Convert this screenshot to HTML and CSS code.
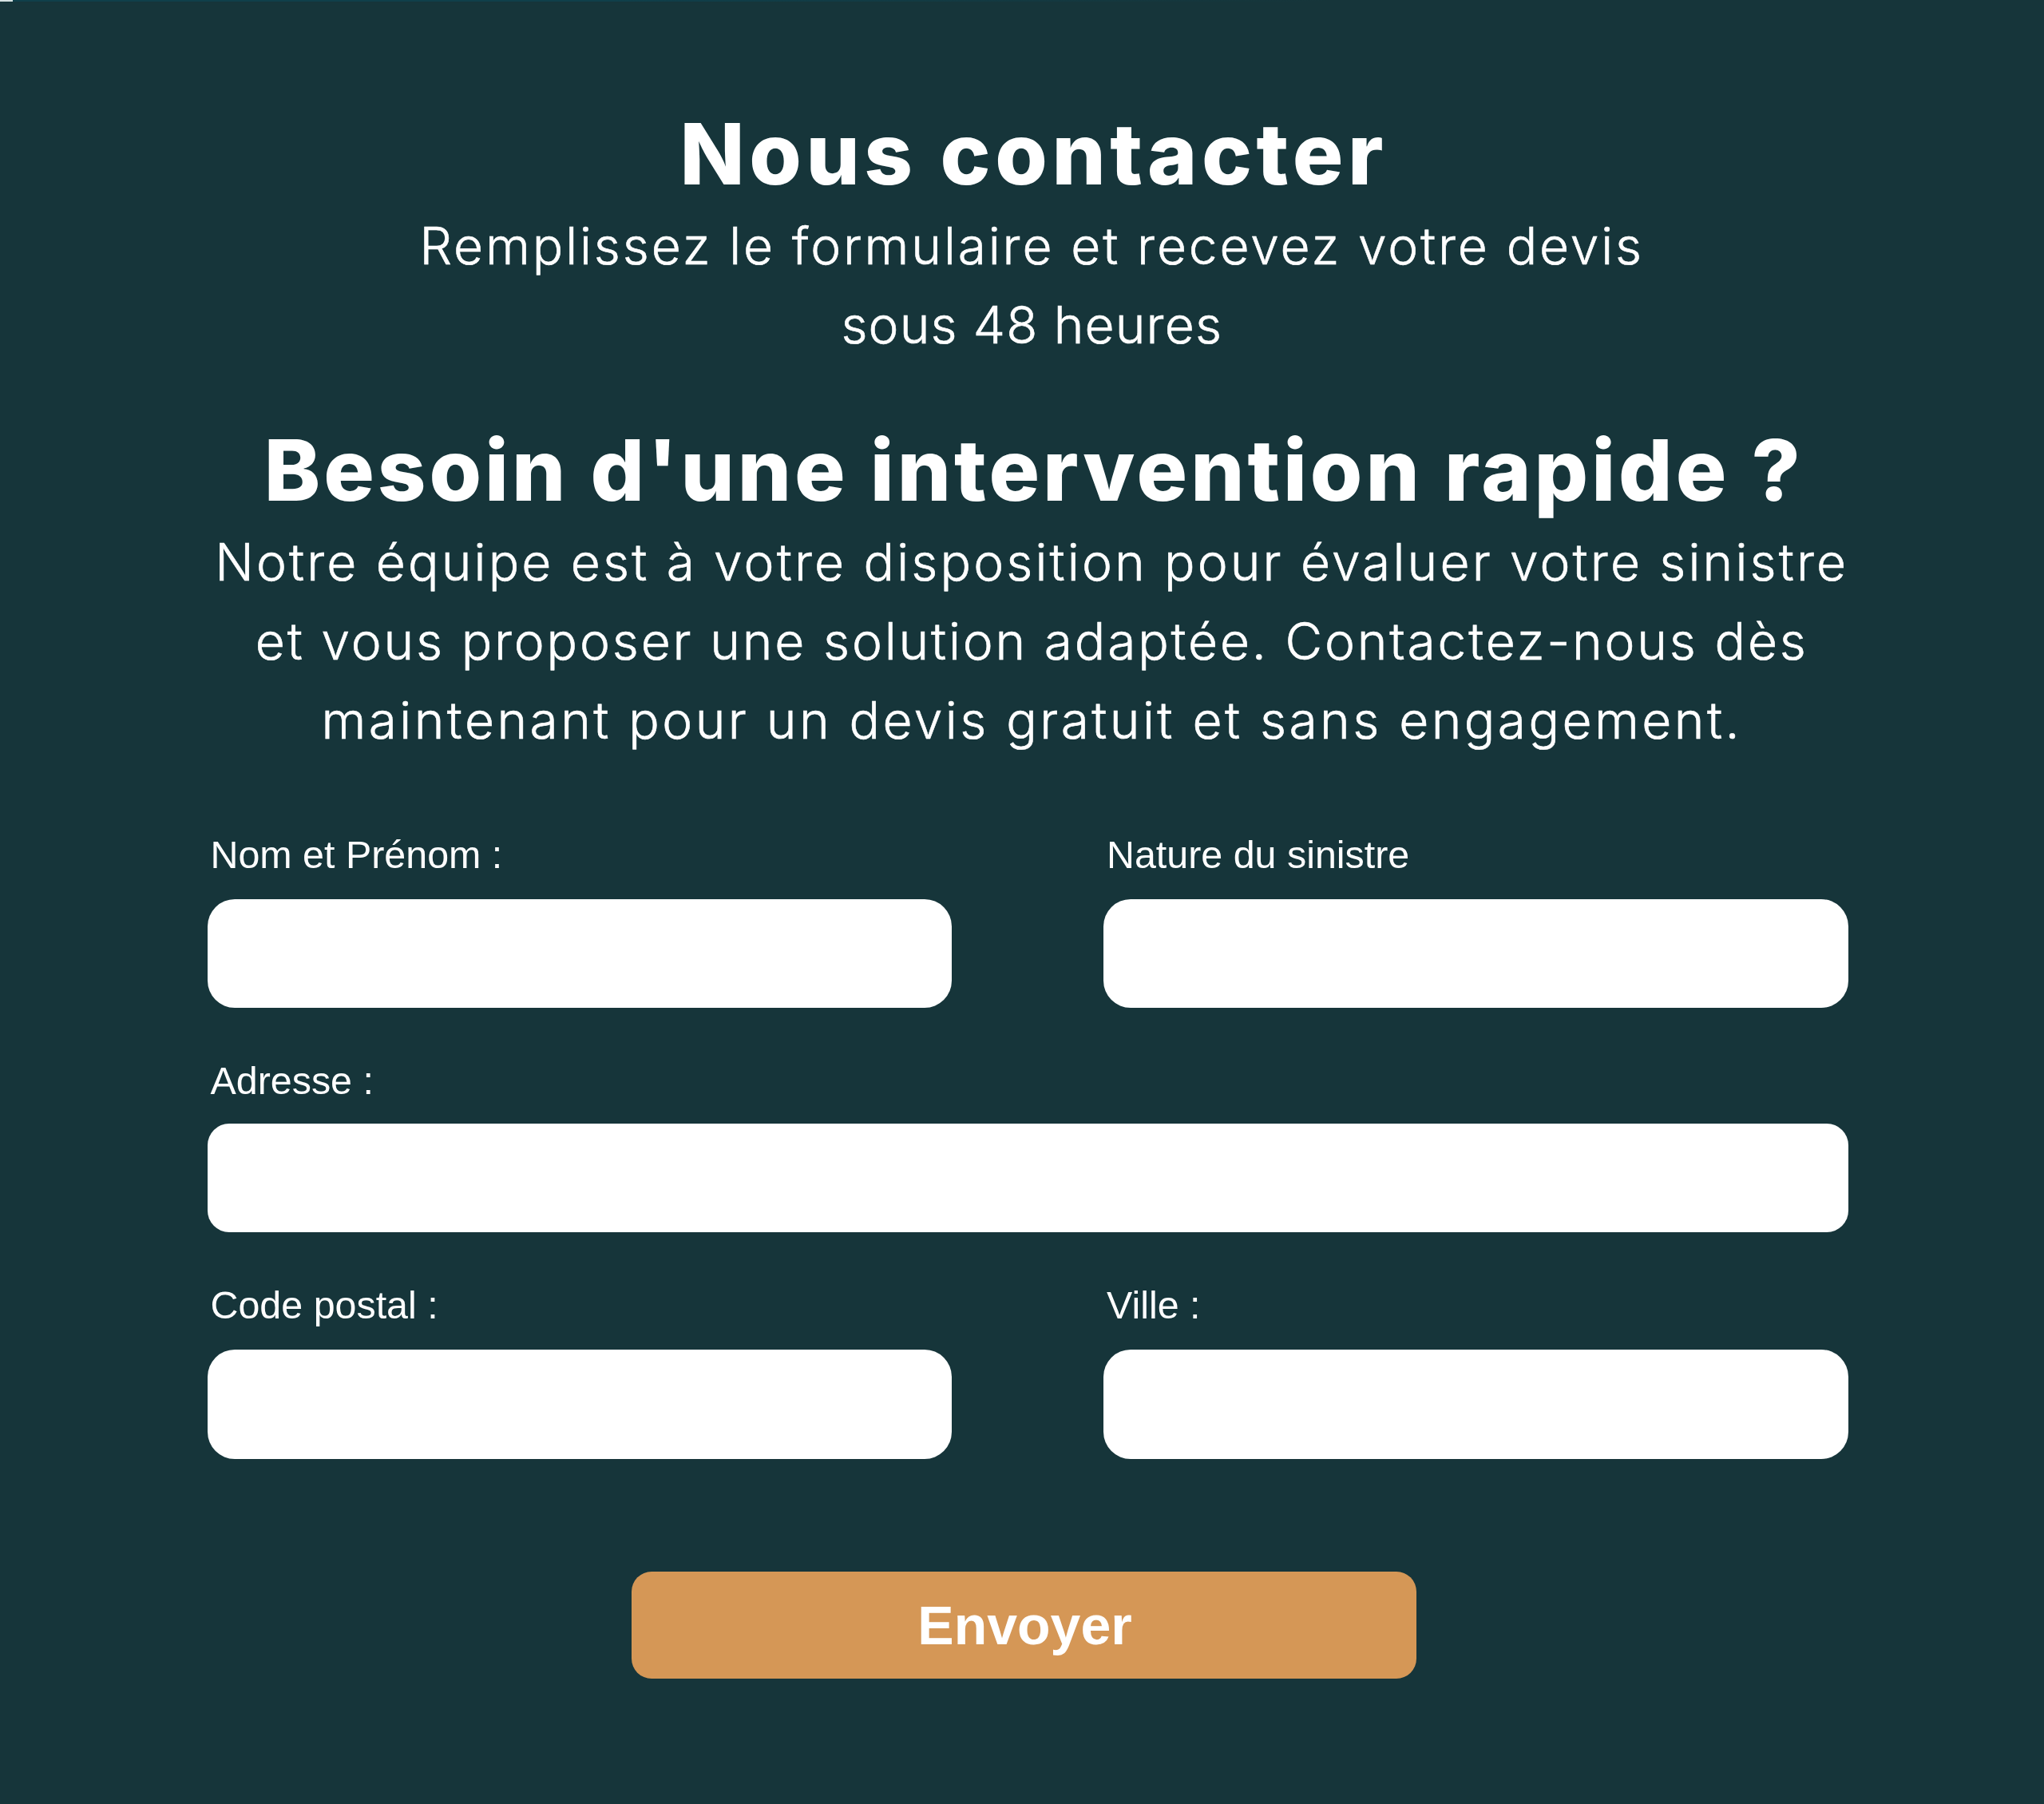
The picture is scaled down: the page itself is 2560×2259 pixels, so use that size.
FILE: index.html
```
<!DOCTYPE html>
<html lang="fr">
<head>
  <meta charset="UTF-8" />
  <title>Nous contacter</title>
  <link rel="stylesheet" href="styles.css">
</head>
<body>
  <div class="top-line"><span class="top-line-start"></span></div>

  <section class="contact">
    <div class="intro">
      <h1 class="title title-contact">Nous contacter</h1>
      <p class="text">
        <span class="line line-1">Remplissez le formulaire et recevez votre devis</span>
        <span class="line line-2">sous 48 heures</span>
      </p>

      <h2 class="title title-urgent">Besoin d'une intervention rapide ?</h2>
      <p class="text">
        <span class="line line-3">Notre équipe est à votre disposition pour évaluer votre sinistre</span>
        <span class="line line-4">et vous proposer une solution adaptée. Contactez-nous dès</span>
        <span class="line line-5">maintenant pour un devis gratuit et sans engagement.</span>
      </p>
    </div>

    <form class="contact-form">
      <div class="row">
        <div class="field">
          <label for="nom">Nom et Prénom :</label>
          <input type="text" id="nom" name="nom">
        </div>
        <div class="field">
          <label for="sinistre">Nature du sinistre</label>
          <input type="text" id="sinistre" name="sinistre">
        </div>
      </div>

      <div class="row">
        <div class="field field-wide">
          <label for="adresse">Adresse :</label>
          <input type="text" id="adresse" name="adresse">
        </div>
      </div>

      <div class="row">
        <div class="field">
          <label for="code">Code postal :</label>
          <input type="text" id="code" name="code">
        </div>
        <div class="field">
          <label for="ville">Ville :</label>
          <input type="text" id="ville" name="ville">
        </div>
      </div>

      <button type="submit" class="send">Envoyer</button>
    </form>
  </section>
</body>
</html>
```

FILE: styles.css
```
* {
  box-sizing: border-box;
}

body {
  margin: 0;
  min-height: 2259px;
  background-color: #16353a;
  color: white;
  font-family: "Liberation Sans", Arial, sans-serif;
}

.top-line {
  height: 2px;
  background: linear-gradient(to right, #0f3f4a 30%, #16353a 65%);
}

.top-line-start {
  display: block;
  width: 16px;
  height: 2px;
  background-color: #d5e2e2;
}

.contact {
  padding: 137.5px 245.5px 0 259.5px;
}

/* Intro */
.intro {
  margin: 0 -26.5px 0 -16px;
  text-align: center;
  font-family: Inter, "Open Sans", sans-serif;
}

.title {
  margin: 0 0 12px 5px;
  font-size: 106px;
  font-weight: 800;
  line-height: 106px;
  white-space: nowrap;
}

.title-contact {
  letter-spacing: 5.6px;
}

.title-urgent {
  margin-top: 80px;
  letter-spacing: 3.95px;
}

.text {
  margin: 0;
  font-size: 64px;
  font-weight: 300;
  line-height: 99px;
  -webkit-text-stroke: 0.6px white;
}

.line {
  display: block;
  white-space: nowrap;
}

.line-1 {
  letter-spacing: 2.88px;
}

.line-2 {
  letter-spacing: 1.15px;
}

.line-3 {
  letter-spacing: 3.16px;
}

.line-4 {
  letter-spacing: 2.84px;
}

.line-5 {
  letter-spacing: 3.46px;
}

/* Form */
.contact-form {
  display: flex;
  flex-direction: column;
  gap: 63px;
  margin-top: 91px;
}

.row {
  display: flex;
  justify-content: space-between;
}

.field {
  display: flex;
  flex-direction: column;
  gap: 28px;
  width: 932.5px;
}

.field label {
  padding-left: 4px;
  font-size: 48.4px;
  line-height: 56px;
}

.field input {
  width: 100%;
  height: 136.4px;
  padding: 0 30px;
  border: none;
  border-radius: 34px;
  background-color: white;
  font-size: 48.4px;
}

.field-wide {
  gap: 26px;
  width: 100%;
}

.field-wide input {
  border-radius: 27px;
}

.send {
  align-self: center;
  width: 983.5px;
  height: 134px;
  margin: 78px 9px 0 0;
  padding: 0 0 0 2px;
  border: none;
  border-radius: 25px;
  background-color: #d59756;
  color: white;
  font-family: inherit;
  font-size: 68px;
  font-weight: bold;
  cursor: pointer;
}
```
